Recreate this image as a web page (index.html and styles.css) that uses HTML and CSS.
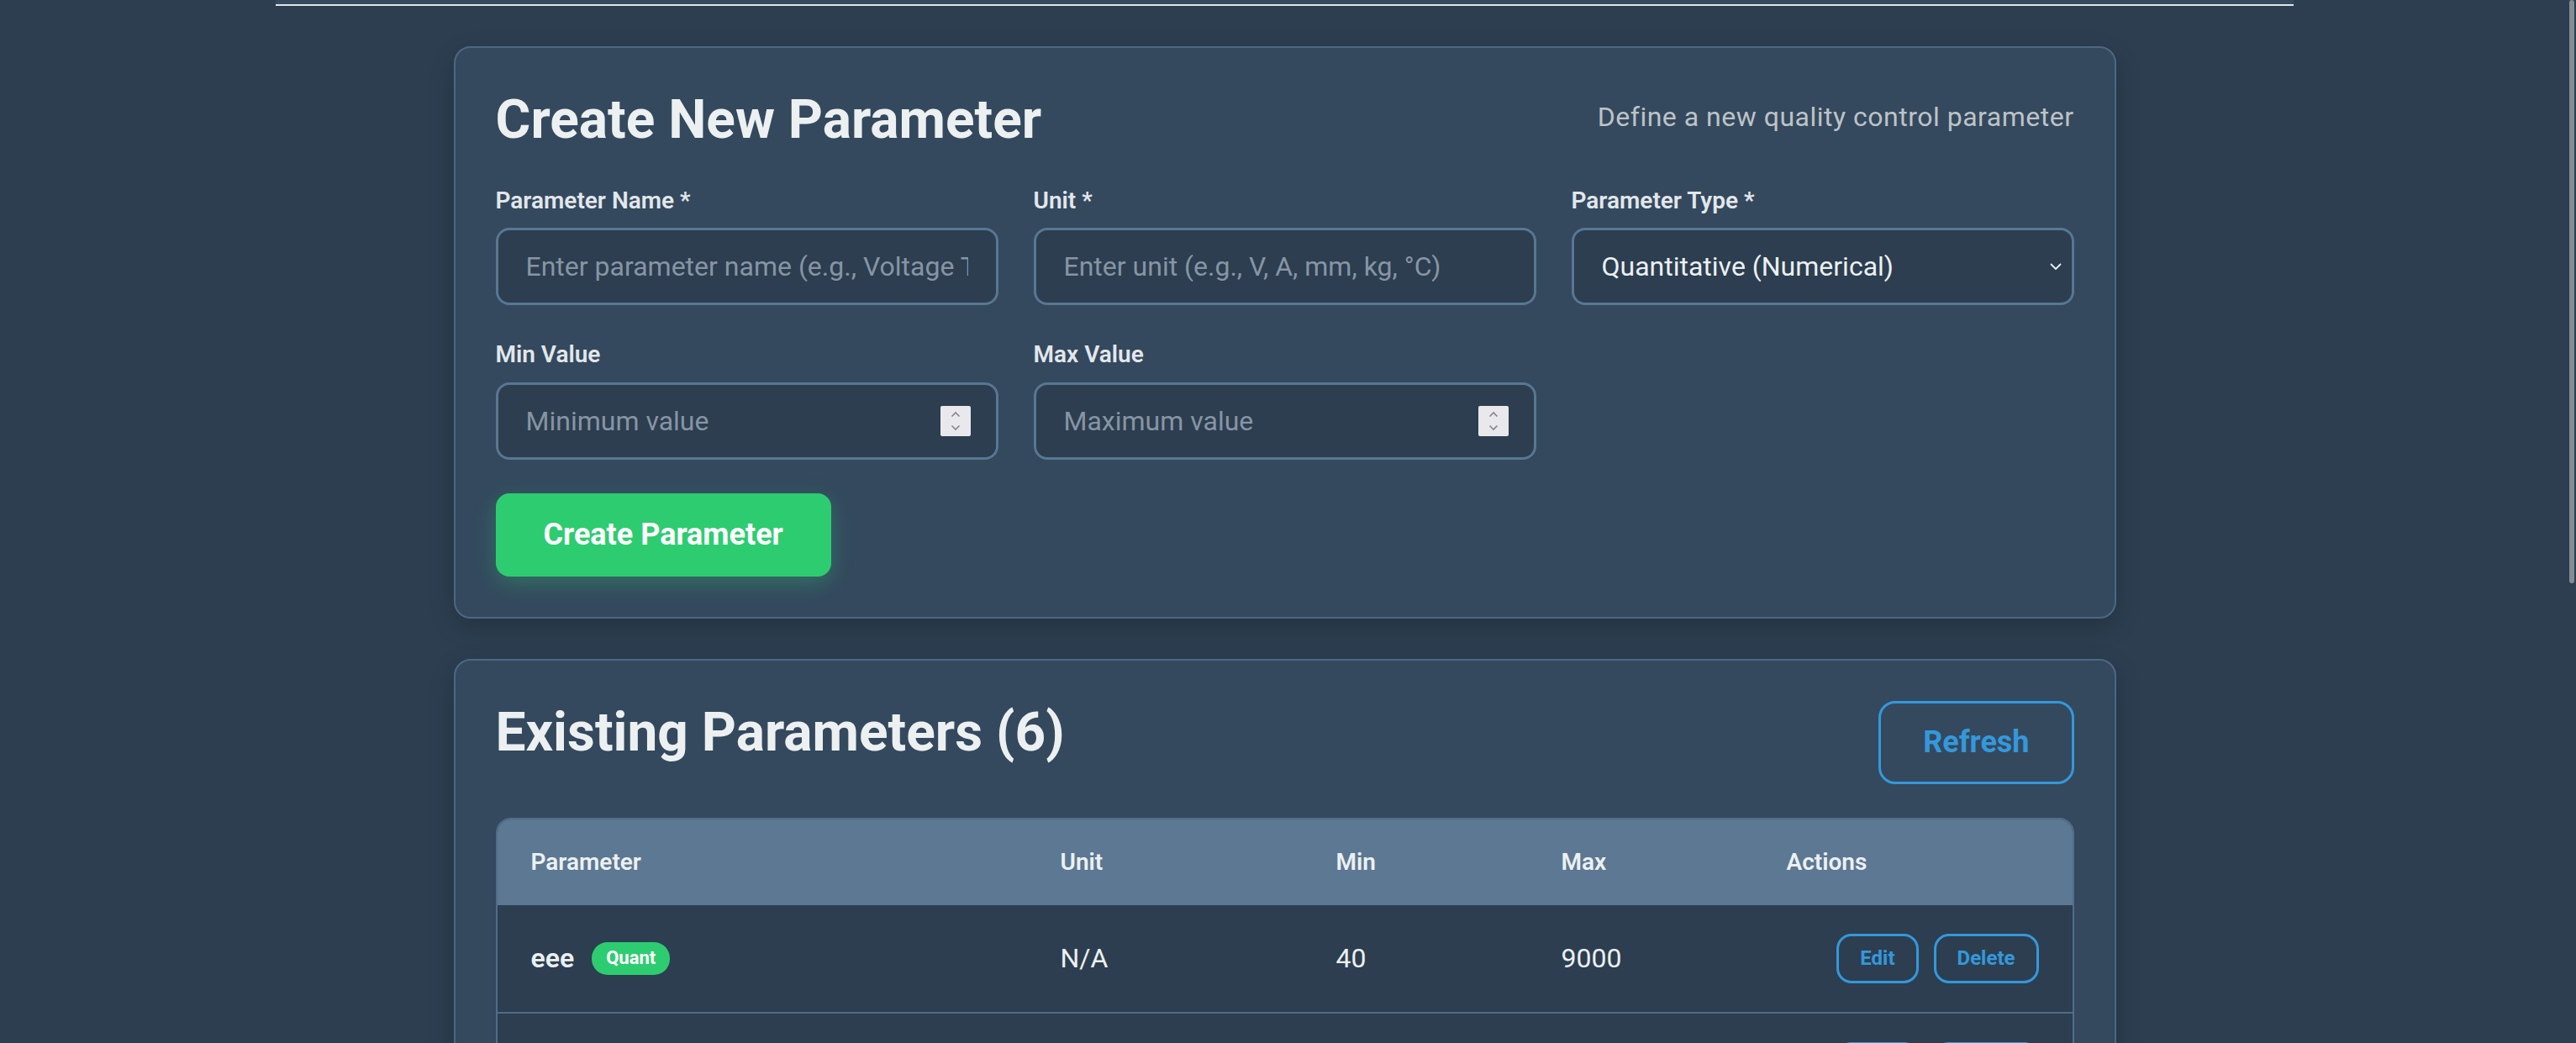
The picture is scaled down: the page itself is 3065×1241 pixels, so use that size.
FILE: index.html
```html
<!DOCTYPE html>
<html lang="en">
<head>
<meta charset="utf-8">
<title>Quality Control Parameters</title>
<link rel="stylesheet" href="styles.css">
</head>
<body>
<div class="topbar"></div>
<main class="container">
  <section class="card">
    <div class="card-head">
      <h2>Create New Parameter</h2>
      <p class="sub">Define a new quality control parameter</p>
    </div>
    <div class="form-grid">
      <div class="field">
        <label>Parameter Name *</label>
        <input class="control" type="text" placeholder="Enter parameter name (e.g., Voltage Test)">
      </div>
      <div class="field">
        <label>Unit *</label>
        <input class="control" type="text" placeholder="Enter unit (e.g., V, A, mm, kg, °C)">
      </div>
      <div class="field">
        <label>Parameter Type *</label>
        <div class="select-wrap">
          <select class="control select">
            <option>Quantitative (Numerical)</option>
            <option>Qualitative (Pass/Fail)</option>
          </select>
          <svg class="chev" width="14" height="9" viewBox="0 0 14 9"><polyline points="1.5,1.5 7,7 12.5,1.5" fill="none" stroke="#ecf0f1" stroke-width="1.8" stroke-linecap="round" stroke-linejoin="round"/></svg>
        </div>
      </div>
      <div class="field">
        <label>Min Value</label>
        <div class="control num">
          <input class="num-input" type="text" placeholder="Minimum value">
          <span class="spin"><svg width="36" height="36" viewBox="0 0 36 36"><polyline points="13.5,12.5 18,8 22.5,12.5" fill="none" stroke="#86868c" stroke-width="1.6"/><polyline points="13.5,23.5 18,28 22.5,23.5" fill="none" stroke="#86868c" stroke-width="1.6"/></svg></span>
        </div>
      </div>
      <div class="field">
        <label>Max Value</label>
        <div class="control num">
          <input class="num-input" type="text" placeholder="Maximum value">
          <span class="spin"><svg width="36" height="36" viewBox="0 0 36 36"><polyline points="13.5,12.5 18,8 22.5,12.5" fill="none" stroke="#86868c" stroke-width="1.6"/><polyline points="13.5,23.5 18,28 22.5,23.5" fill="none" stroke="#86868c" stroke-width="1.6"/></svg></span>
        </div>
      </div>
    </div>
    <button class="btn-primary" type="button">Create Parameter</button>
  </section>

  <section class="card">
    <div class="card-head top">
      <h2>Existing Parameters (6)</h2>
      <button class="btn-outline" type="button">Refresh</button>
    </div>
    <div class="table-wrap">
      <table>
        <thead>
          <tr>
            <th class="col-param">Parameter</th>
            <th class="col-unit">Unit</th>
            <th class="col-min">Min</th>
            <th class="col-max">Max</th>
            <th>Actions</th>
          </tr>
        </thead>
        <tbody>
          <tr>
            <td><div class="pcell"><span class="pname">eee</span><span class="badge">Quant</span></div></td>
            <td>N/A</td>
            <td>40</td>
            <td>9000</td>
            <td><div class="actions"><button class="btn-sm" type="button">Edit</button><button class="btn-sm" type="button">Delete</button></div></td>
          </tr>
          <tr>
            <td><div class="pcell"><span class="pname">Voltage</span><span class="badge">Quant</span></div></td>
            <td>V</td>
            <td>210</td>
            <td>240</td>
            <td><div class="actions"><button class="btn-sm" type="button">Edit</button><button class="btn-sm" type="button">Delete</button></div></td>
          </tr>
          <tr>
            <td><div class="pcell"><span class="pname">Current</span><span class="badge">Quant</span></div></td>
            <td>A</td>
            <td>0.5</td>
            <td>2</td>
            <td><div class="actions"><button class="btn-sm" type="button">Edit</button><button class="btn-sm" type="button">Delete</button></div></td>
          </tr>
          <tr>
            <td><div class="pcell"><span class="pname">Length</span><span class="badge">Quant</span></div></td>
            <td>mm</td>
            <td>95</td>
            <td>105</td>
            <td><div class="actions"><button class="btn-sm" type="button">Edit</button><button class="btn-sm" type="button">Delete</button></div></td>
          </tr>
          <tr>
            <td><div class="pcell"><span class="pname">Weight</span><span class="badge">Quant</span></div></td>
            <td>kg</td>
            <td>1</td>
            <td>5</td>
            <td><div class="actions"><button class="btn-sm" type="button">Edit</button><button class="btn-sm" type="button">Delete</button></div></td>
          </tr>
          <tr>
            <td><div class="pcell"><span class="pname">Surface Finish</span><span class="badge qual">Qual</span></div></td>
            <td>N/A</td>
            <td>N/A</td>
            <td>N/A</td>
            <td><div class="actions"><button class="btn-sm" type="button">Edit</button><button class="btn-sm" type="button">Delete</button></div></td>
          </tr>
        </tbody>
      </table>
    </div>
  </section>
</main>
<div class="scrollbar"><div class="thumb"></div></div>
</body>
</html>
```

FILE: styles.css
```css
* {
  box-sizing: border-box;
}

html {
  background: #2c3e50;
}

body {
  margin: 0 8px 0 0;
  background: #2c3e50;
  color: #ecf0f1;
  font-family: Roboto, "Noto Sans", "Liberation Sans", sans-serif;
  line-height: 1.2;
}

.topbar {
  max-width: 2401px;
  height: 7px;
  margin: 0 auto;
  background: #34495e;
  border-bottom: 2px solid #e1e5e9;
}

.container {
  max-width: 1978px;
  margin: 48px auto 0;
}

.card {
  background: #34495e;
  border: 2px solid #4b6884;
  border-radius: 20px;
  padding: 48px;
  margin-bottom: 48px;
  box-shadow: 0 10px 30px rgba(0, 0, 0, 0.18);
}

.card-head {
  display: flex;
  justify-content: space-between;
  align-items: center;
  margin-bottom: 40px;
}

.card-head.top {
  align-items: flex-start;
}

.card-head h2 {
  margin: 0;
  font-size: 64px;
  font-weight: 700;
  line-height: 1.2;
  color: #ecf0f1;
}

.sub {
  margin: 0 0 8px;
  font-size: 32px;
  letter-spacing: 0.5px;
  color: #bdc3c7;
}

.form-grid {
  display: grid;
  grid-template-columns: repeat(3, 1fr);
  gap: 42px;
}

.field label {
  display: block;
  font-size: 28px;
  font-weight: 600;
  margin-bottom: 16px;
  color: #e2e7eb;
}

.control {
  display: block;
  width: 100%;
  height: 92px;
  margin: 0;
  background: #2c3e50;
  border: 3px solid #587792;
  border-radius: 16px;
  padding: 0 33px;
  font-family: inherit;
  font-size: 32px;
  color: #ecf0f1;
  outline: none;
}

.control::placeholder,
.num-input::placeholder {
  color: #8795a3;
}

.select-wrap {
  position: relative;
}

.select {
  appearance: none;
  -webkit-appearance: none;
}

.chev {
  position: absolute;
  right: 15px;
  top: 42px;
}

.num {
  display: flex;
  align-items: center;
  padding: 0 30px 0 33px;
}

.num-input {
  flex: 1;
  min-width: 0;
  background: transparent;
  border: 0;
  padding: 0;
  margin: 0;
  outline: none;
  font-family: inherit;
  font-size: 32px;
  color: #ecf0f1;
}

.spin {
  display: block;
  width: 36px;
  height: 36px;
  background: #e9e9ed;
  border-radius: 2px;
}

.spin svg {
  display: block;
}

.btn-primary {
  display: block;
  margin-top: 40px;
  background: #2ecc71;
  color: #ffffff;
  border: 0;
  border-radius: 16px;
  padding: 28px 57px;
  font-family: inherit;
  font-size: 36px;
  font-weight: 700;
  line-height: 1.2;
  box-shadow: 0 8px 26px rgba(46, 204, 113, 0.3);
}

.btn-outline {
  background: transparent;
  border: 3px solid #3498db;
  color: #3498db;
  border-radius: 20px;
  padding: 25px 50px;
  font-family: inherit;
  font-size: 36px;
  font-weight: 700;
  line-height: 1.2;
}

.table-wrap {
  border: 2px solid #4f6d8a;
  border-radius: 18px;
  overflow: hidden;
}

table {
  width: 100%;
  border-collapse: collapse;
  table-layout: fixed;
}

th {
  background: #5c7892;
  text-align: left;
  font-size: 28px;
  font-weight: 600;
  padding: 34px 40px;
  color: #ecf0f1;
}

.col-param { width: 630px; }
.col-unit { width: 328px; }
.col-min { width: 268px; }
.col-max { width: 268px; }

td {
  background: #2c3e50;
  font-size: 32px;
  padding: 34px 40px;
  border-bottom: 2px solid #4f6d8a;
  vertical-align: middle;
  color: #ecf0f1;
}

.pcell {
  display: flex;
  align-items: center;
  gap: 21px;
}

.pname {
  font-weight: 600;
}

.badge {
  background: #2ecc71;
  color: #ffffff;
  font-size: 22px;
  font-weight: 700;
  padding: 6px 17px;
  border-radius: 19px;
}

.badge.qual {
  background: #f39c12;
}

.actions {
  display: flex;
  justify-content: flex-end;
  gap: 18px;
}

.btn-sm {
  background: transparent;
  border: 3px solid #3498db;
  color: #3498db;
  border-radius: 18px;
  padding: 12px 25px;
  font-family: inherit;
  font-size: 24px;
  font-weight: 700;
  line-height: 1.2;
}

.scrollbar {
  position: fixed;
  top: 0;
  right: 0;
  width: 9px;
  height: 100vh;
  background: #2c3e50;
}

.thumb {
  width: 6px;
  height: 694px;
  margin-left: 1px;
  border-radius: 3px;
  background: #848b92;
}
```
